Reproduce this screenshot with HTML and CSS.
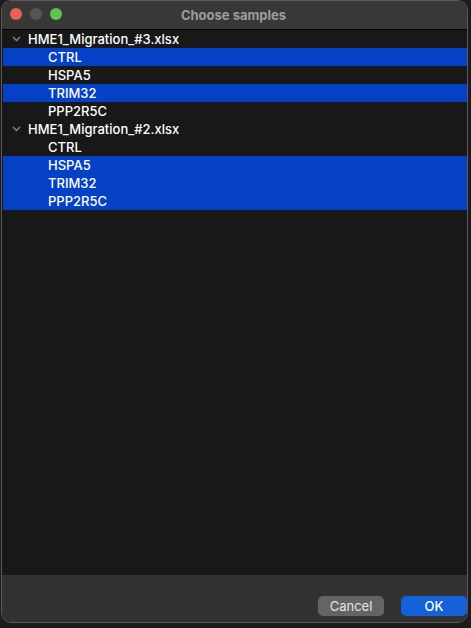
FILE: index.html
```html
<!DOCTYPE html>
<html>
<head>
<meta charset="utf-8">
<link rel="stylesheet" href="styles.css">
</head>
<body>
<div class="window">
  <div class="titlebar">
    <div class="lights">
      <span class="light red"></span>
      <span class="light gray"></span>
      <span class="light green"></span>
    </div>
    <div class="title">Choose samples</div>
  </div>
  <div class="list">
    <div class="row group"><svg class="chev" width="9" height="6" viewBox="0 0 9 6"><path d="M1 1 L4.5 4.5 L8 1" fill="none" stroke="#8a8a8a" stroke-width="1.3"/></svg><span>HME1_Migration_#3.xlsx</span></div>
    <div class="row child sel">CTRL</div>
    <div class="row child">HSPA5</div>
    <div class="row child sel">TRIM32</div>
    <div class="row child">PPP2R5C</div>
    <div class="row group"><svg class="chev" width="9" height="6" viewBox="0 0 9 6"><path d="M1 1 L4.5 4.5 L8 1" fill="none" stroke="#8a8a8a" stroke-width="1.3"/></svg><span>HME1_Migration_#2.xlsx</span></div>
    <div class="row child">CTRL</div>
    <div class="row child sel">HSPA5</div>
    <div class="row child sel">TRIM32</div>
    <div class="row child sel">PPP2R5C</div>
  </div>
  <div class="footer">
    <button class="btn cancel">Cancel</button>
    <button class="btn ok">OK</button>
  </div>
</div>
</body>
</html>
```
FILE: styles.css
```css
html, body {
  margin: 0;
  padding: 0;
  background: #1c1c1c;
  width: 471px;
  height: 628px;
  overflow: hidden;
}
body {
  font-family: "Inter", "Liberation Sans", sans-serif;
  font-size: 13px;
}
.window {
  margin-left: 1px;
  width: 465px;
  height: 621px;
  border: 1px solid #5a5a5a;
  border-radius: 10px;
  overflow: hidden;
  display: flex;
  flex-direction: column;
  background: #181818;
}
.titlebar {
  height: 28px;
  background: #383838;
  border-bottom: 1px solid #000;
  position: relative;
  display: flex;
  align-items: center;
  justify-content: center;
  flex: none;
}
.lights {
  position: absolute;
  left: 8px;
  top: 7px;
  display: flex;
  gap: 8px;
}
.light {
  width: 12px;
  height: 12px;
  border-radius: 50%;
  display: block;
}
.red { background: #ec5f5a; }
.gray { background: #555555; }
.green { background: #5fc451; }
.title {
  color: #9d9d9d;
  font-weight: 700;
  font-size: 13px;
  margin-left: -2px;
}
.list {
  flex: 1;
  background: #181818;
  padding: 0 0 0 1px;
}
.row {
  height: 18px;
  line-height: 18px;
  color: #ffffff;
  display: flex;
  align-items: center;
  white-space: nowrap;
  font-weight: 500;
}
.row.group {
  padding-left: 9px;
}
.chev {
  margin-right: 7px;
}
.row.child {
  padding-left: 45px;
}
.row.sel {
  background: #0541c6;
}
.footer {
  height: 47px;
  background: #323232;
  flex: none;
  display: flex;
  justify-content: flex-end;
  align-items: flex-start;
  padding: 21px 0 0 0;
  box-sizing: border-box;
  gap: 17px;
}
.btn {
  height: 20px;
  width: 66px;
  border: none;
  border-radius: 5px;
  color: #e4e4e4;
  font-family: "Inter", "Liberation Sans", sans-serif;
  font-size: 13px;
  padding: 0;
}
.cancel { background: #646464; }
.ok { background: #1561d9; color: #fff; font-weight: 500; margin-right: 0; }
```
